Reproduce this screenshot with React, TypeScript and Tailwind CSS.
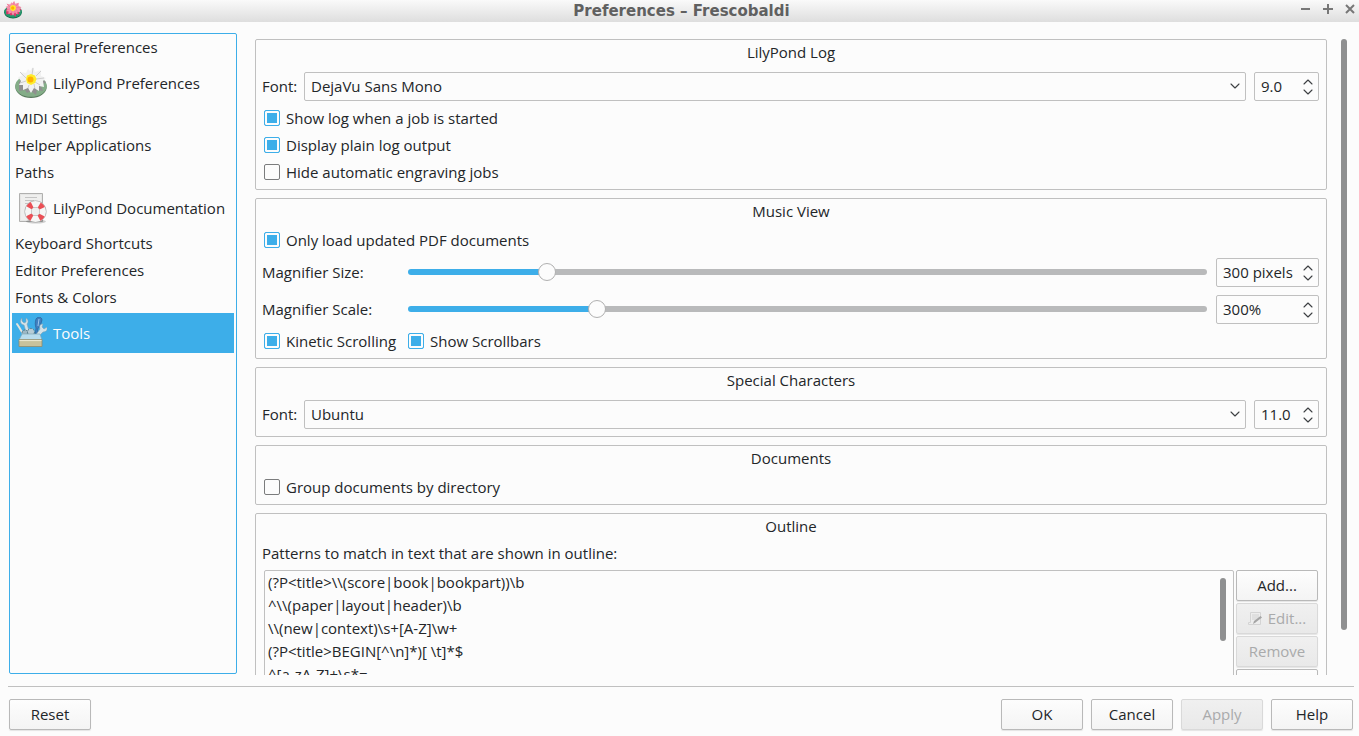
import { useState } from "react";
import type { CSSProperties, ReactNode } from "react";
import { ChevronDown, ChevronUp } from "lucide-react";
import clsx from "clsx";

function LilyIcon({ pad, padEdge, petal, shade, className }: { pad: string; padEdge: string; petal: string; shade: string; className: string }) {
  return (
    <svg viewBox="0 0 32 32" className={className} aria-hidden="true">
      <ellipse cx="16" cy="20" rx="15.700" ry="11" fill={padEdge} />
      <ellipse cx="16" cy="19" rx="15.700" ry="10.800" fill={pad} />
      <path d="M4 15l0 9 6-1 2 3 4-2 5 4 1-5 6 1-2-5 5-4-6-4H8z" fill={shade} />
      <path d="M5 5l6 1 2-4 2 2 3-4 2 5 6-2 0 6 5 2-3 3 1 6-5-1 0 5-5-3-3 5-3-5-5 2 0-5-4 0 2-4-3-4 4-1z" fill={petal} />
      <path d="M5 5l6 6M18 1l-1 7M26 4l-5 5M29 11l-8 1M5 16l6-2M12 24l2-6M20 22l-1-5M25 18l-5-3" stroke={shade} strokeWidth="0.6" opacity="0.6" />
      <path d="M16 7l4 1.500 1.500 3.500-1.500 4-4 2-4-2-1-4 1-3.500z" fill="#ffec2a" />
      <circle cx="15.500" cy="12.500" r="3" fill="#ffb000" />
    </svg>
  );
}

function DocumentationIcon() {
  return (
    <svg viewBox="0 0 32 32" className="size-8 shrink-0" aria-hidden="true">
      <path d="M4.500 1.500h23v28h-23z" fill="#e6e6e5" stroke="#b0b0af" />
      <path d="M6 3h20v25H6z" fill="#efefee" />
      <path d="M10 5.500h12M10 8.500h9M10 11.500h3" stroke="#c4c4c4" />
      <ellipse cx="21" cy="29.500" rx="10" ry="2" fill="#000" opacity="0.18" />
      <circle cx="20.500" cy="19.500" r="7.500" fill="none" stroke="#a5a5a5" strokeWidth="7" />
      <circle cx="20.500" cy="19.500" r="7.500" fill="none" stroke="#f6f6f5" strokeWidth="6" />
      <circle cx="20.500" cy="19.500" r="7.500" fill="none" stroke="#ea4f55" strokeWidth="6" strokeDasharray="4.400 7.380" strokeDashoffset="-3.700" />
    </svg>
  );
}

function ToolsIcon() {
  return (
    <svg viewBox="0 0 32 32" className="size-8 shrink-0" aria-hidden="true">
      <path d="M2 7l2 3 6 10" stroke="#e4e4dc" strokeWidth="2" strokeLinecap="round" fill="none" />
      <path d="M7 1c-3 3-1 7 2 7l3 10 3-1-3-10c2-2 1-5-1-6l0 4-2 1-2-2z" fill="#d3e2e8" stroke="#7fa3b5" strokeWidth="0.600" />
      <path d="M21 2c2-3 6-2 6 1l-2 7-2 1-1 8h-2l1-8c-1-3-1-6 0-9z" fill="#3f7fc0" stroke="#28568a" strokeWidth="0.600" />
      <path d="M24 2l-1 7" stroke="#9cc6ec" strokeWidth="1" />
      <path d="M28 7c-3 0-4 2-3 5l-5 7 2 2 6-6c3 0 5-2 4-5l-3 2-2-2z" fill="#d3e2e8" stroke="#7fa3b5" strokeWidth="0.600" />
      <circle cx="10" cy="16" r="3" fill="#9db8c4" stroke="#54798b" strokeDasharray="2 1" />
      <circle cx="16" cy="15" r="3.500" fill="#b7ccd5" stroke="#54798b" strokeDasharray="2 1" />
      <path d="M7 17h18l2 6H4z" fill="#b9dcec" stroke="#7ba3b0" strokeWidth="0.600" />
      <path d="M4 22.500h23v7H4z" fill="#c8c29c" stroke="#918c6b" strokeWidth="0.800" />
      <path d="M4.500 23.500h22" stroke="#e9e6cf" strokeWidth="1.200" />
    </svg>
  );
}

function EditIcon() {
  return (
    <svg viewBox="0 0 16 16" className="size-4" aria-hidden="true">
      <path d="M2.500 1.500h10v12h-12v-2h2z" fill="#ededed" stroke="#d4d4d4" />
      <path d="M4 4h7M4 6h7M4 8h5" stroke="#d2d2d2" />
      <path d="M5 13l1-3 6.500-5 1.500 1.500-6.500 5z" fill="#a5a5a5" />
    </svg>
  );
}

const pages: { label: string; icon?: ReactNode }[] = [
  { label: "General Preferences" },
  { label: "LilyPond Preferences", icon: <LilyIcon className="size-8 shrink-0" pad="#84ad88" padEdge="#57795b" petal="#f1f1f1" shade="#8f8f8f" /> },
  { label: "MIDI Settings" },
  { label: "Helper Applications" },
  { label: "Paths" },
  { label: "LilyPond Documentation", icon: <DocumentationIcon /> },
  { label: "Keyboard Shortcuts" },
  { label: "Editor Preferences" },
  { label: "Fonts & Colors" },
  { label: "Tools", icon: <ToolsIcon /> },
];

const patterns = [
  "(?P<title>\\\\(score|book|bookpart))\\b",
  "^\\\\(paper|layout|header)\\b",
  "\\\\(new|context)\\s+[A-Z]\\w+",
  "(?P<title>BEGIN[^\\n]*)[ \\t]*$",
  "^[a-zA-Z]+\\s*=",
];

function Group({ title, className, children }: { title: string; className?: string; children: ReactNode }) {
  return (
    <section className={clsx("shrink-0 rounded-xs border border-[#c0c0c0] px-1.5", className)}>
      <h2 className="h-7 text-center leading-6">{title}</h2>
      {children}
    </section>
  );
}

function Check({ label, checked, className }: { label: string; checked?: boolean; className?: string }) {
  return (
    <label className={clsx("flex h-[27px] items-center gap-1.5 pl-0.5 whitespace-nowrap", className)}>
      <input
        type="checkbox"
        defaultChecked={checked}
        className="mb-0.5 size-4 shrink-0 appearance-none rounded-xs border border-[#7b7c7d] bg-[#fcfcfc] checked:border-[#3daee9] checked:bg-[#3daee9] checked:shadow-[inset_0_0_0_2px_#fcfcfc]"
      />
      {label}
    </label>
  );
}

function Spin({ label, value, className }: { label: string; value: string; className: string }) {
  return (
    <div className={clsx("flex h-[29px] shrink-0 items-center rounded-xs border border-[#c0c0c0] pr-0.5 pl-1.5", className)}>
      <input aria-label={label} defaultValue={value} className="w-full min-w-0 flex-1 bg-transparent outline-none" />
      <div className="flex flex-col text-[#3c3f42]">
        <button aria-label={`Increase ${label}`} className="flex h-2.5 items-center">
          <ChevronUp className="size-4" strokeWidth={1.6} />
        </button>
        <button aria-label={`Decrease ${label}`} className="flex h-2.5 items-center">
          <ChevronDown className="size-4" strokeWidth={1.6} />
        </button>
      </div>
    </div>
  );
}

function FontRow({ id, font, size }: { id: string; font: string; size: string }) {
  return (
    <div className="mt-1 flex items-center pr-px">
      <label htmlFor={id} className="w-[42px]">
        Font:
      </label>
      <div className="relative mr-2 flex-1">
        <select id={id} className="h-[29px] w-full appearance-none rounded-xs border border-[#c0c0c0] bg-transparent px-1.5">
          <option>{font}</option>
        </select>
        <ChevronDown className="pointer-events-none absolute top-1.5 right-[3px] size-4 text-[#3c3f42]" strokeWidth={1.6} />
      </div>
      <Spin label="font size" value={size} className="w-[65px]" />
    </div>
  );
}

function SliderRow({ id, label, min, max, start, text }: { id: string; label: string; min: number; max: number; start: number; text: string }) {
  const [value, setValue] = useState(start);
  const fill = { "--fill": `${((value - min) / (max - min)) * 100}%` } as CSSProperties;
  return (
    <div className="flex items-center pr-px">
      <label htmlFor={id} className="w-[146px]">
        {label}
      </label>
      <input
        id={id}
        type="range"
        min={min}
        max={max}
        value={value}
        onChange={(e) => setValue(Number(e.target.value))}
        style={fill}
        className="mr-[9px] mb-0.5 h-[18px] min-w-0 flex-1 appearance-none bg-transparent [&::-webkit-slider-runnable-track]:h-1.5 [&::-webkit-slider-runnable-track]:rounded-full [&::-webkit-slider-runnable-track]:bg-[linear-gradient(to_right,#3daee9_var(--fill),#b9babb_var(--fill))] [&::-webkit-slider-thumb]:-mt-1.5 [&::-webkit-slider-thumb]:size-[18px] [&::-webkit-slider-thumb]:appearance-none [&::-webkit-slider-thumb]:rounded-full [&::-webkit-slider-thumb]:border [&::-webkit-slider-thumb]:border-[#b0b0b0] [&::-webkit-slider-thumb]:bg-[#fcfcfc]"
      />
      <Spin label={label} value={text} className="w-[103px]" />
    </div>
  );
}

function PushButton({ children, label, disabled }: { children?: ReactNode; label?: string; disabled?: boolean }) {
  return (
    <button
      disabled={disabled}
      aria-label={label}
      className="flex h-[31px] w-[82px] shrink-0 items-center justify-center gap-1 rounded-xs border border-[#b9b9b9] bg-linear-to-b from-[#fdfdfd] to-[#f4f4f4] shadow-[0_1px_1px_#e4e4e4] disabled:border-[#d9d9d9] disabled:from-[#f0f0f0] disabled:to-[#e9e9e9] disabled:text-[#a9aaab]"
    >
      {children}
    </button>
  );
}

export default function App() {
  return (
    <div className="flex h-screen flex-col bg-[#fcfcfc] font-['Open_Sans','Noto_Sans',sans-serif] text-[15px] leading-[19px] text-[#232629]">
      <header className="flex h-[22px] shrink-0 items-center bg-linear-to-b from-[#fafafa] to-[#dedede] px-1">
        <LilyIcon className="mb-0.5 size-[18px]" pad="#1f9a6c" padEdge="#0c5f40" petal="#f58fa9" shade="#d9386a" />
        <h1 className="flex-1 pl-10 text-center font-['DejaVu_Sans',sans-serif] text-[15px] font-bold text-[#606060]">Preferences – Frescobaldi</h1>
        <div className="mb-1 flex gap-3 text-[#777777]">
          <button aria-label="Minimize">
            <svg viewBox="0 0 10 10" className="size-2.5">
              <path d="M0 5h9" stroke="currentColor" strokeWidth="2" />
            </svg>
          </button>
          <button aria-label="Maximize">
            <svg viewBox="0 0 10 10" className="size-2.5">
              <path d="M0 5h10M5 0v10" stroke="currentColor" strokeWidth="2" />
            </svg>
          </button>
          <button aria-label="Close">
            <svg viewBox="0 0 10 10" className="size-2.5">
              <path d="M1 1l8 8M9 1l-8 8" stroke="currentColor" strokeWidth="2" />
            </svg>
          </button>
        </div>
      </header>

      <div className="flex min-h-0 flex-1 pt-[11px] pl-[9px]">
        <nav className="mb-px flex w-[228px] shrink-0 flex-col gap-1 rounded-xs border border-[#3daee9] p-0.5">
          {pages.map(({ label, icon }) => (
            <button
              key={label}
              className={clsx(
                "flex items-center gap-1.5 pl-[3px] text-left whitespace-nowrap",
                icon ? "h-10" : "h-[23px]",
                label === "Tools" && "bg-[#3daee9] text-[#fcfcfc]"
              )}
            >
              {icon}
              {label}
            </button>
          ))}
        </nav>

        <main className="ml-[18px] flex min-w-0 flex-1 flex-col gap-2 overflow-hidden pt-1.5">
          <Group title="LilyPond Log" className="pb-[3px]">
            <FontRow id="log-font" font="DejaVu Sans Mono" size="9.0" />
            <div className="mt-1">
              <Check label="Show log when a job is started" checked />
              <Check label="Display plain log output" checked />
              <Check label="Hide automatic engraving jobs" />
            </div>
          </Group>

          <Group title="Music View" className="pb-[3px]">
            <Check label="Only load updated PDF documents" checked />
            <div className="my-1 flex flex-col gap-2">
              <SliderRow id="mag-size" label="Magnifier Size:" min={100} max={1300} start={300} text="300 pixels" />
              <SliderRow id="mag-scale" label="Magnifier Scale:" min={150} max={800} start={300} text="300%" />
            </div>
            <div className="flex">
              <Check label="Kinetic Scrolling" checked className="w-36" />
              <Check label="Show Scrollbars" checked />
            </div>
          </Group>

          <Group title="Special Characters" className="pb-[7px]">
            <FontRow id="special-font" font="Ubuntu" size="11.0" />
          </Group>

          <Group title="Documents" className="pb-[3px]">
            <Check label="Group documents by directory" />
          </Group>

          <Group title="Outline">
            <p className="h-7 leading-[22px]">Patterns to match in text that are shown in outline:</p>
            <div className="flex gap-0.5 px-0.5">
              <div className="flex h-40 flex-1 rounded-xs border border-[#c0c0c0] pr-[7px] pl-[3px]">
                <ul className="flex-1 leading-[23px]">
                  {patterns.map((pattern) => (
                    <li key={pattern}>{pattern}</li>
                  ))}
                </ul>
                <div className="mt-[7px] h-[63px] w-1.5 rounded-full bg-[#8f9091]" />
              </div>
              <div className="flex flex-col gap-0.5">
                <PushButton>Add...</PushButton>
                <PushButton disabled>
                  <EditIcon />
                  Edit...
                </PushButton>
                <PushButton disabled>Remove</PushButton>
                <PushButton label="Restore Defaults" />
              </div>
            </div>
          </Group>
        </main>

        <div className="mt-1.5 mr-3 mb-[45px] ml-3.5 w-1.5 shrink-0 rounded-full bg-[#8f9091]" />
      </div>

      <footer className="mt-[11px] mr-[5px] ml-2 flex shrink-0 gap-2 border-t border-[#c0c0c0] pt-3 pr-px pb-1.5 pl-px">
        <PushButton>Reset</PushButton>
        <div className="flex-1" />
        <PushButton>OK</PushButton>
        <PushButton>Cancel</PushButton>
        <PushButton disabled>Apply</PushButton>
        <PushButton>Help</PushButton>
      </footer>
    </div>
  );
}
